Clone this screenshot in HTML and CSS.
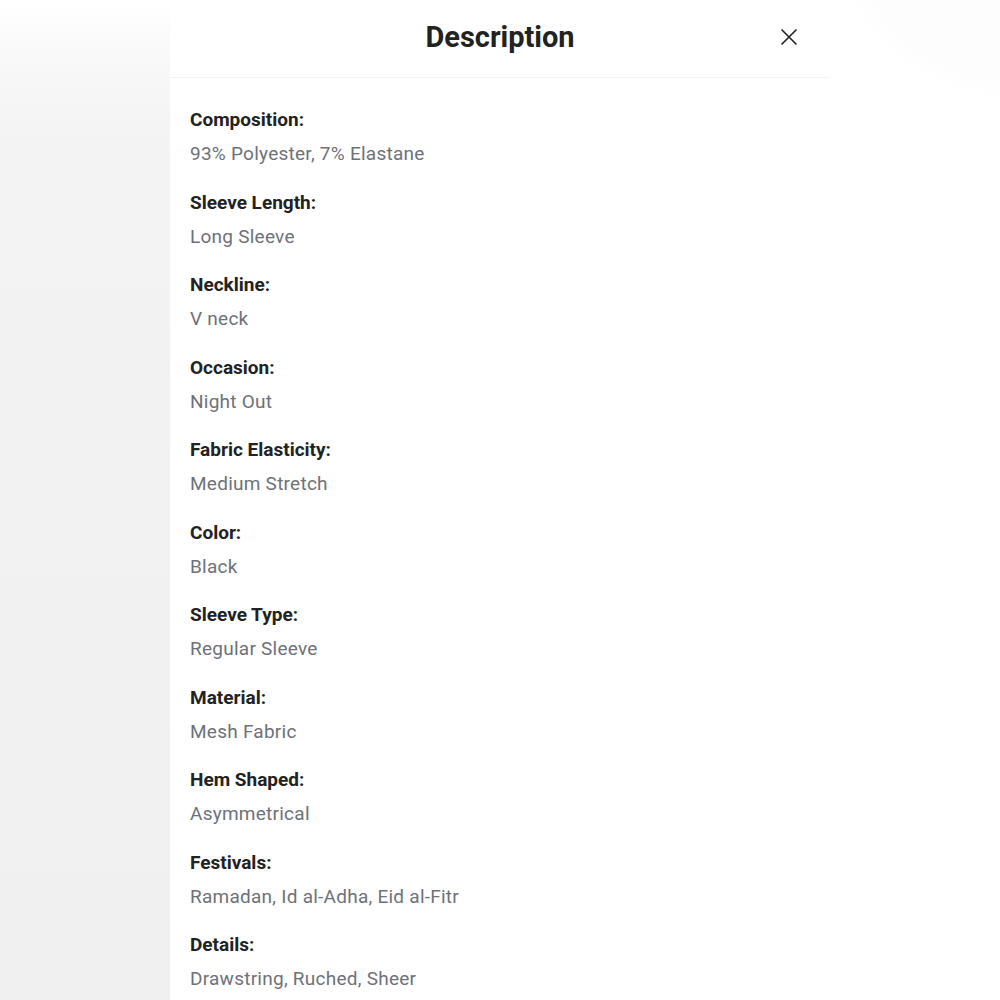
FILE: index.html
```html
<!DOCTYPE html>
<html lang="en">
<head>
<meta charset="utf-8">
<title>Description</title>
<link rel="stylesheet" href="styles.css">
</head>
<body>
<div class="page">
  <div class="backdrop-left"></div>
  <section class="panel">
    <header class="panel-header">
      <h1 class="panel-title">Description</h1>
      <button class="close-btn" aria-label="Close">
        <svg width="18" height="18" viewBox="0 0 18 18"><path d="M1.5 1.5 L16.5 16.5 M16.5 1.5 L1.5 16.5" stroke="#222" stroke-width="1.6" fill="none"/></svg>
      </button>
    </header>
    <dl class="attrs">
      <div class="attr"><dt>Composition:</dt><dd>93% Polyester, 7% Elastane</dd></div>
      <div class="attr"><dt>Sleeve Length:</dt><dd>Long Sleeve</dd></div>
      <div class="attr"><dt>Neckline:</dt><dd>V neck</dd></div>
      <div class="attr"><dt>Occasion:</dt><dd>Night Out</dd></div>
      <div class="attr"><dt>Fabric Elasticity:</dt><dd>Medium Stretch</dd></div>
      <div class="attr"><dt>Color:</dt><dd>Black</dd></div>
      <div class="attr"><dt>Sleeve Type:</dt><dd>Regular Sleeve</dd></div>
      <div class="attr"><dt>Material:</dt><dd>Mesh Fabric</dd></div>
      <div class="attr"><dt>Hem Shaped:</dt><dd>Asymmetrical</dd></div>
      <div class="attr"><dt>Festivals:</dt><dd>Ramadan, Id al-Adha, Eid al-Fitr</dd></div>
      <div class="attr"><dt>Details:</dt><dd>Drawstring, Ruched, Sheer</dd></div>
    </dl>
  </section>
  <div class="backdrop-right"><div class="blob"></div></div>
</div>
</body>
</html>
```

FILE: styles.css
```css
html, body {
  margin: 0;
  padding: 0;
  height: 100%;
}
body {
  font-family: Roboto, "Liberation Sans", Arial, sans-serif;
  background: #fff;
  overflow: hidden;
}
.page {
  display: grid;
  grid-template-columns: 170px 660px 1fr;
  height: 1000px;
}
.backdrop-left {
  background:
    linear-gradient(to bottom, #ffffff 0px, #fafafa 40px, #f3f3f3 140px, #f0f0f0 100%);
}
.backdrop-right {
  position: relative;
  overflow: hidden;
  background: #fff;
}
.blob {
  position: absolute;
  left: 30px;
  top: -150px;
  width: 320px;
  height: 240px;
  border-radius: 50%;
  background: #fdfdfd;
  filter: blur(8px);
}
.panel {
  background: #fff;
  display: flex;
  flex-direction: column;
}
.panel-header {
  box-sizing: border-box;
  height: 78px;
  border-bottom: 1px solid #f3f3f3;
  display: flex;
  align-items: center;
  justify-content: center;
  position: relative;
}
.panel-title {
  margin: -4px 0 0;
  font-size: 29px;
  font-weight: 700;
  color: #222;
  letter-spacing: 0;
}
.close-btn {
  position: absolute;
  right: 32px;
  top: 28px;
  width: 18px;
  height: 18px;
  padding: 0;
  border: 0;
  background: none;
  display: flex;
}
.attrs {
  margin: 0;
  padding: 30px 20px 0;
}
.attr {
  margin-bottom: 24.5px;
}
.attr dt {
  font-size: 19px;
  line-height: 24px;
  font-weight: 700;
  color: #222;
}
.attr dd {
  margin: 10px 0 0;
  font-size: 19px;
  line-height: 24px;
  letter-spacing: 0.25px;
  color: #6e7179;
}
```
